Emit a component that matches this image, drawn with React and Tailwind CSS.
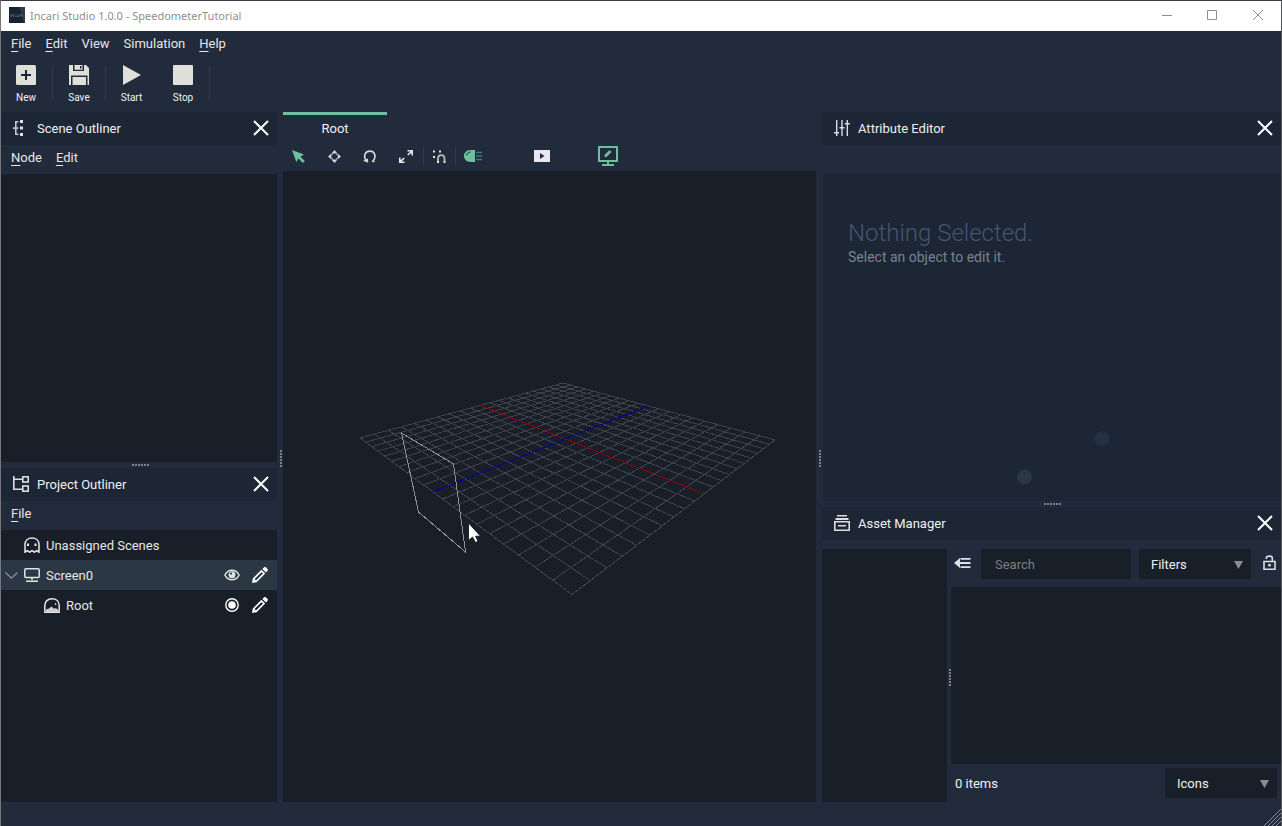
import React from "react";

const focus = "outline-none focus-visible:ring-1 focus-visible:ring-[#6ebf9f]";

/* ---------- small building blocks ---------- */

function MenuItem({ label, mnemonic }) {
  return (
    <button type="button" className={"text-[#e6e6e6] hover:text-white " + focus}>
      {mnemonic ? (
        <>
          <span className="underline underline-offset-3">{label[0]}</span>
          {label.slice(1)}
        </>
      ) : (
        label
      )}
    </button>
  );
}

function ToolButton({ label, children, className }) {
  return (
    <button type="button" className={"flex flex-col items-center gap-[5px] text-[10px] leading-4 text-[#f0f0f0] " + focus + " " + className}>
      {children}
      {label}
    </button>
  );
}

function CloseButton({ label }) {
  return (
    <button type="button" aria-label={label} className={"flex pb-px " + focus}>
      <svg width="16" height="16" viewBox="0 0 16 16" stroke="#fff" strokeWidth="2">
        <path d="M1 1 15 15M15 1 1 15" />
      </svg>
    </button>
  );
}

function PanelHeader({ icon, title }) {
  return (
    <header className="flex h-[33px] shrink-0 items-center justify-between rounded-xs bg-[#1c2635] pr-2 pl-3">
      <div className="flex items-center gap-2">
        <span className="pb-px">{icon}</span>
        <h2>{title}</h2>
      </div>
      <CloseButton label={"Close " + title} />
    </header>
  );
}

function Dots({ vertical }) {
  const cells = [0, 3, 6, 9, 12, 15];
  return (
    <svg width={vertical ? 2 : 17} height={vertical ? 17 : 2} fill="#7d838e" className="shrink-0">
      {cells.map((c) => (
        <rect key={c} x={vertical ? 0 : c} y={vertical ? c : 0} width="2" height="2" />
      ))}
    </svg>
  );
}

function Splitter({ vertical }) {
  return (
    <div className={"flex shrink-0 items-center justify-center pl-0.5 " + (vertical ? "w-[6px] pt-0.5" : "h-[6px]")}>
      <Dots vertical={vertical} />
    </div>
  );
}

function Dropdown({ label, options }) {
  return (
    <div className="relative h-[30px] w-28 shrink-0">
      <select aria-label={label} className={"h-full w-full appearance-none rounded-xs bg-[#181f28] px-3 pt-0.5 text-[#f0f0f0] " + focus}>
        {options.map((o) => (
          <option key={o}>{o}</option>
        ))}
      </select>
      <svg className="pointer-events-none absolute top-3 right-2" width="9" height="8" viewBox="0 0 9 8" fill="#8b8b91">
        <path d="M0 0H9L4.5 8Z" />
      </svg>
    </div>
  );
}

/* ---------- icons ---------- */

const SceneOutlinerIcon = () => (
  <svg width="16" height="16" viewBox="0 0 16 16" fill="#e4e4e8">
    <path d="M2 1H5.5V2.5H3.6V13.500H5.500V15H2V9H0V7.200H2Z" fillOpacity=".85" />
    <path d="M5.500 7.200H3V9H5.500Z" fillOpacity=".7" />
    <rect x="7" y="0" width="3" height="3" />
    <rect x="7" y="6.500" width="3" height="3" />
    <rect x="7" y="13" width="3" height="3" />
  </svg>
);

const ProjectOutlinerIcon = () => (
  <svg width="16" height="16" viewBox="0 0 16 16" fill="none" stroke="#dcdce2" strokeWidth="1.6">
    <path d="M.8 0V13.200H9.500M.8 3.300H9.500" />
    <rect x="9.800" y=".8" width="5.400" height="5.200" />
    <rect x="9.800" y="10" width="5.400" height="5.200" />
  </svg>
);

const SlidersIcon = () => (
  <svg width="16" height="16" viewBox="0 0 16 16" fill="#dcdce2">
    <path d="M2 0H3.4V16H2ZM7.3 0H8.7V16H7.3ZM12.6 0H14V16H12.6ZM0 12H5V13.6H0ZM5.5 7H10.5V8.6H5.5ZM10.8 3H15.8V4.6H10.8Z" />
  </svg>
);

const ArchiveIcon = () => (
  <svg width="16" height="16" viewBox="0 0 16 16" fill="#dcdce2">
    <path d="M3 0H13V1.600H3ZM1.500 3H14.500V5H1.500ZM4 10H12V11.600H4Z" />
    <path fillRule="evenodd" d="M0 6H16V16H0ZM1.6 7.6V14.4H14.4V7.6Z" />
  </svg>
);

const GhostIcon = () => (
  <svg width="16" height="16" viewBox="0 0 16 16" fill="none" stroke="#e6e6ea" strokeWidth="1.5">
    <path d="M1 15.2V7.5C1 3.5 4 .9 8 .9S15 3.5 15 7.5V15.2L12.7 13.6 10.4 15.2 8 13.6 5.6 15.2 3.3 13.6Z" />
    <path d="M4 6.5V9M11.5 6.5V9" strokeWidth="2" />
  </svg>
);

const MonitorIcon = () => (
  <svg width="16" height="14" viewBox="0 0 16 14" fill="none" stroke="#dfe5e3" strokeWidth="1.5">
    <rect x=".8" y=".8" width="14.400" height="8.800" rx="1" />
    <path d="M8 9.5V12M2 13.2H14" />
  </svg>
);

const SceneIcon = () => (
  <svg width="16" height="15" viewBox="0 0 16 15" fill="none" stroke="#e6e6ea" strokeWidth="1.5">
    <path d="M.8 14.2V7.5C.8 3.5 3.8 .8 8 .8S15.2 3.5 15.2 7.5V14.2Z" />
    <path d="M2 14V11.6L5 10.400 7.500 8.500 9.500 10.400 12 10.200 14 11.600V14Z" fill="#cfcfd3" stroke="none" />
    <circle cx="11.6" cy="6" r=".9" fill="#cfcfd3" stroke="none" />
  </svg>
);

const EyeIcon = () => (
  <svg width="16" height="12" viewBox="0 0 16 12" fill="none" stroke="#dce5e2" strokeWidth="1.5">
    <path d="M.9 6C2.5 2.8 5 1.2 8 1.2S13.5 2.8 15.1 6C13.5 9.2 11 10.8 8 10.8S2.5 9.2 .9 6Z" />
    <circle cx="8" cy="5.8" r="3.5" fill="#dce5e2" stroke="none" />
    <circle cx="7" cy="4.6" r="1.1" fill="#2c3745" stroke="none" />
  </svg>
);

const PencilIcon = () => (
  <svg width="16" height="16" viewBox="0 0 16 16" fill="#fff">
    <path fillRule="evenodd" d="M0 16 .8 11.400 9.400 2.800 13.200 6.600 4.600 15.200ZM2.600 12 4 13.400 11 6.600 9.400 5.200Z" />
    <path d="M10.4 2 12.200.3C13 -.1 13.600 0 14 .4L15.600 2C16 2.400 16 3 15.600 3.600L14.100 5.600Z" />
  </svg>
);

const TargetIcon = () => (
  <svg width="14" height="14" viewBox="0 0 14 14" fill="none" stroke="#fff" strokeWidth="1.4">
    <circle cx="7" cy="7" r="6.2" />
    <circle cx="7" cy="7" r="3.8" fill="#fff" stroke="none" />
  </svg>
);

/* ---------- 3D viewport ---------- */

const gridCorners = [[77, 267], [289, 423.5], [492, 269], [280, 212]];

function projector([p0, p1, p2, p3]) {
  const sx = p0[0] - p1[0] + p2[0] - p3[0];
  const sy = p0[1] - p1[1] + p2[1] - p3[1];
  const dx1 = p1[0] - p2[0], dx2 = p3[0] - p2[0];
  const dy1 = p1[1] - p2[1], dy2 = p3[1] - p2[1];
  const det = dx1 * dy2 - dx2 * dy1;
  const g = (sx * dy2 - dx2 * sy) / det;
  const h = (dx1 * sy - sx * dy1) / det;
  const a = p1[0] - p0[0] + g * p1[0], b = p3[0] - p0[0] + h * p3[0];
  const d = p1[1] - p0[1] + g * p1[1], e = p3[1] - p0[1] + h * p3[1];
  return (u, v) => {
    const w = g * u + h * v + 1;
    return [(a * u + b * v + p0[0]) / w, (d * u + e * v + p0[1]) / w];
  };
}

const project = projector(gridCorners);
const line = (u1, v1, u2, v2) => "M" + project(u1, v1).join(" ") + "L" + project(u2, v2).join(" ");
const steps = Array.from({ length: 21 }, (_, i) => i / 20);
const gridPath = steps.map((t) => line(t, 0, t, 1) + line(0, t, 1, t)).join("");

function Viewport() {
  return (
    <div className="flex flex-1 items-center justify-center overflow-hidden bg-[#181f28]">
      <svg width="533" height="631" viewBox="0 0 533 631" fill="none" role="img" aria-label="3D scene" className="shrink-0">
        <g shapeRendering="crispEdges" strokeWidth="1">
          <path d={gridPath} stroke="#3f4049" />
          <path d={line(0, 0.5, 1, 0.5)} stroke="#870006" />
          <path d={line(0.5, 0, 0.5, 1)} stroke="#00008c" />
          <path d="M118.500 262 170.500 293 182.500 381 135.500 341Z" stroke="#8f9090" />
        </g>
        <path d="M185.500 352V369.500L189.500 366 192.500 371.500 195 370.300 192.500 365.200H197.500Z" fill="#fff" stroke="#0c0f14" strokeWidth=".8" />
      </svg>
    </div>
  );
}

function ViewportTool({ label, className = "", children }) {
  return (
    <button type="button" aria-label={label} className={"flex h-[22px] shrink-0 items-center justify-center " + focus + " " + className}>
      {children}
    </button>
  );
}

function ViewportToolbar() {
  return (
    <div className="flex h-[26px] items-center pb-1" role="toolbar" aria-label="Viewport tools">
      <ViewportTool label="Select" className="w-[33px] pr-[3px]">
        <svg width="13" height="13" viewBox="0 0 13 13" fill="#6ebf9f"><path d="M0 0 12 4.6 8.400 6.700 12.800 11 10.800 13 6.500 8.600 4.300 12Z" /></svg>
      </ViewportTool>
      <ViewportTool label="Move" className="w-9">
        <svg width="13" height="13" viewBox="0 0 13 13" fill="none" stroke="#d6d6dc" strokeWidth="1.2">
          <path d="M6.500 0 9.500 3.400H3.500ZM6.500 13 9.500 9.600H3.500ZM0 6.500 3.400 3.500V9.500ZM13 6.500 9.600 3.500V9.500Z" fill="#d6d6dc" stroke="none" />
          <path d="M4.600 4.600 3.800 3.800M8.400 4.600 9.200 3.800M4.600 8.400 3.800 9.200M8.400 8.400 9.200 9.200" />
        </svg>
      </ViewportTool>
      <ViewportTool label="Rotate" className="w-9">
        <svg width="14" height="13" viewBox="0 0 14 13" fill="none" stroke="#d6d6dc" strokeWidth="1.700">
          <path d="M4 11.300C-.4 7.500 1.800 1.200 7 1.200S13.500 7.500 9.800 11.200" />
          <path d="M0 10.800 5.200 12.800 5 8.600Z" fill="#d6d6dc" stroke="none" />
          <path d="M9 11.500H11.500" strokeWidth="1.400" />
        </svg>
      </ViewportTool>
      <ViewportTool label="Scale" className="w-[35px]">
        <svg width="14" height="13" viewBox="0 0 14 13" fill="none" stroke="#e4e4e8" strokeWidth="1.600">
          <path d="M8.500 .8H13.200V5.500M13.200 .8 8.800 5M.8 7.500V12.200H5.500M.8 12.200 5.200 8" />
        </svg>
      </ViewportTool>
      <span className="h-[18px] w-px bg-[#313b4e]" />
      <ViewportTool label="Snap" className="w-[31px]">
        <svg width="13" height="13" viewBox="0 0 13 13" fill="#e4e4e8">
          <path d="M0 .5H2V2.500H0ZM6 .5H8V2.500H6ZM0 6H2V8H0Z" />
          <path d="M5 11V8.500C5 4 11.500 4 11.500 8.500V11" fill="none" stroke="#b8b9bf" strokeWidth="1.800" />
          <path d="M4 11H6V13H4ZM10.500 11H12.500V13H10.500Z" />
        </svg>
      </ViewportTool>
      <span className="h-[18px] w-px bg-[#313b4e]" />
      <ViewportTool label="Lighting" className="w-[34px]">
        <svg width="18" height="12" viewBox="0 0 18 12">
          <path d="M11 0H6.500C2.500 0 0 2.800 0 6S2.500 12 6.500 12H11Z" fill="#6ebf9f" />
          <path d="M2.500 5.500C3.200 3.300 4.500 2.300 6.700 1.900" stroke="#222b3b" fill="none" />
          <path d="M12 2.500H18M12 6H18M12 9.500H18" stroke="#3f7a6c" strokeWidth="1.300" />
        </svg>
      </ViewportTool>
      <ViewportTool label="Preview" className="ml-9 w-8">
        <svg width="16" height="12" viewBox="0 0 16 12"><path d="M0 0H16V12H0Z" fill="#e9e7f1" /><path d="M6 3 10.500 6 6 9Z" fill="#222b3b" /></svg>
      </ViewportTool>
      <ViewportTool label="Edit screen" className="ml-[34px] w-8">
        <svg width="20" height="20" viewBox="0 0 20 20" fill="none" stroke="#6ebf9f" strokeWidth="2">
          <path d="M1 1H19V15H1ZM10 15V18M4 19H16" />
          <path d="M7 10.500 12.500 5" strokeWidth="2.800" />
        </svg>
      </ViewportTool>
    </div>
  );
}

/* ---------- tree rows ---------- */

function TreeRow({ icon, label, indent, selected, expandable, action }) {
  return (
    <li className={"flex h-[30px] items-center pr-[9px] text-[#e6e6e6] " + (selected ? "bg-[#2c3745]" : "")}>
      <span className={"flex shrink-0 items-center pl-1 " + (indent ? "w-[43px]" : "w-[23px]")}>
        {expandable && (
          <button type="button" aria-label={"Collapse " + label} className={focus}>
            <svg width="13" height="7" viewBox="0 0 13 7" fill="none" stroke="#8f969f" strokeWidth="1.200"><path d="M.5 .5 6.500 6.200 12.500 .5" /></svg>
          </button>
        )}
      </span>
      {icon}
      <span className="ml-[6px] flex-1 pt-0.5">{label}</span>
      {action && (
        <>
          <button type="button" aria-label={action.label} className={"mr-3 flex w-4 justify-center " + focus}>{action.icon}</button>
          <button type="button" aria-label={"Edit " + label} className={focus}><PencilIcon /></button>
        </>
      )}
    </li>
  );
}

/* ---------- faint backdrop of the empty attribute editor ---------- */

const specks = Array.from({ length: 110 }, (_, i) => ({
  x: 300 + ((i * 7) % 15) * 6,
  y: 34 + ((i * 53) % 283),
}));

function AttributeBackdrop() {
  return (
    <svg className="absolute inset-0" width="458" height="327" viewBox="0 0 458 327" aria-hidden="true">
      <circle cx="279" cy="264.500" r="7.500" fill="#243142" />
      <circle cx="201.500" cy="303" r="7.500" fill="#2a3646" />
      <g fill="#202a39">
        {specks.map((s, i) => (
          <rect key={i} x={s.x} y={s.y} width="1" height="1" />
        ))}
      </g>
    </svg>
  );
}

/* ---------- page ---------- */

export default function App() {
  return (
    <div className="flex min-h-screen flex-col border-x border-t border-t-[#3b3b48] border-r-[#55565c] border-l-[#76777b] bg-[#222b3b] font-[Roboto,sans-serif] text-[13px] leading-5 text-[#f0f0f0]">
      <div className="flex h-[30px] shrink-0 items-center bg-white pb-0.5 pl-2 text-[#8f8f8f]">
        <svg width="16" height="16" viewBox="0 0 16 16" aria-hidden="true">
          <rect width="16" height="16" fill="#182231" />
          <path d="M10 0H16V16H15Z" fill="#2d3b4e" />
          <text x="1" y="9.500" fontSize="4" fill="#6f7783">INCARI</text>
        </svg>
        <h1 className="ml-[5px] flex-1 pt-0.5 font-['Noto_Sans',sans-serif] text-[11px]">Incari Studio 1.0.0 - SpeedometerTutorial</h1>
        <button type="button" aria-label="Minimize" className="flex h-full w-[45px] items-center justify-center">
          <svg width="10" height="10" stroke="#8f8f8f"><path d="M0 5.500H10" /></svg>
        </button>
        <button type="button" aria-label="Maximize" className="flex h-full w-[46px] items-center justify-center">
          <svg width="10" height="10" fill="none" stroke="#8f8f8f"><path d="M.5 .5H9.500V9.500H.5Z" /></svg>
        </button>
        <button type="button" aria-label="Close" className="flex h-full w-[46px] items-center justify-center">
          <svg width="10" height="10" stroke="#8f8f8f"><path d="M0 0 10 10M10 0 0 10" /></svg>
        </button>
      </div>

      <nav aria-label="Main menu" className="flex h-[26px] shrink-0 items-center gap-[14px] px-[10px]">
        <MenuItem label="File" mnemonic />
        <MenuItem label="Edit" mnemonic />
        <MenuItem label="View" />
        <MenuItem label="Simulation" />
        <MenuItem label="Help" mnemonic />
      </nav>

      <div role="toolbar" aria-label="Project" className="flex h-[55px] shrink-0 items-start pt-2">
        <ToolButton label="New" className="w-[51px] pr-px">
          <svg width="20" height="20" viewBox="0 0 20 20"><rect width="20" height="20" rx="1.500" fill="#dfe0da" /><path d="M10 5V15M5 10H15" stroke="#1c2635" strokeWidth="2" /></svg>
        </ToolButton>
        <span className="mt-px h-[34px] w-px bg-[#323c4d]" />
        <ToolButton label="Save" className="w-[52px]">
          <svg width="20" height="20" viewBox="0 0 20 20" fill="#dfe0da">
            <path d="M0 0H4V6H15V0H17L20 3V20H18.500V10.500H2V20H0ZM5.500 0H13.500V4.800H5.500ZM3.500 12H17V20H3.500Z" />
            <path d="M11 1H12.500V3.500H11Z" fill="#1c2635" />
          </svg>
        </ToolButton>
        <span className="mt-px h-[34px] w-px bg-[#323c4d]" />
        <ToolButton label="Start" className="w-[51px]">
          <svg width="18" height="20" viewBox="0 0 18 20" fill="#dfe0da"><path d="M0 0 18 10 0 20Z" /></svg>
        </ToolButton>
        <ToolButton label="Stop" className="w-[52px]">
          <svg width="20" height="20" fill="#dfe0da"><rect width="20" height="20" rx="1" /></svg>
        </ToolButton>
        <span className="mt-px h-[34px] w-px bg-[#323c4d]" />
      </div>

      <main className="flex flex-1">
        <div className="flex w-[276px] shrink-0 flex-col">
          <section className="flex flex-[350] flex-col">
            <PanelHeader icon={<SceneOutlinerIcon />} title="Scene Outliner" />
            <nav aria-label="Scene menu" className="flex h-[29px] items-center gap-[14px] px-[10px] pb-1">
              <MenuItem label="Node" mnemonic />
              <MenuItem label="Edit" mnemonic />
            </nav>
            <div className="flex-1 rounded-xs bg-[#181f28]" />
          </section>
          <Splitter />
          <section className="flex flex-[334] flex-col">
            <PanelHeader icon={<ProjectOutlinerIcon />} title="Project Outliner" />
            <nav aria-label="Project menu" className="flex h-[29px] items-center px-[10px] pb-1">
              <MenuItem label="File" mnemonic />
            </nav>
            <ul className="flex-1 rounded-xs bg-[#181f28]">
              <TreeRow icon={<GhostIcon />} label="Unassigned Scenes" />
              <TreeRow icon={<MonitorIcon />} label="Screen0" selected expandable action={{ label: "Toggle visibility", icon: <EyeIcon /> }} />
              <TreeRow icon={<SceneIcon />} label="Root" indent action={{ label: "Set as default scene", icon: <TargetIcon /> }} />
            </ul>
          </section>
        </div>

        <Splitter vertical />

        <section className="flex min-w-0 flex-1 flex-col">
          <div role="tablist" className="flex">
            <button type="button" role="tab" aria-selected="true" className={"h-[33px] w-[104px] border-t-3 border-[#6ebf9f] pb-0.5 " + focus}>
              Root
            </button>
          </div>
          <ViewportToolbar />
          <Viewport />
        </section>

        <Splitter vertical />

        <div className="flex w-[459px] shrink-0 flex-col">
          <section className="flex flex-[389] flex-col">
            <PanelHeader icon={<SlidersIcon />} title="Attribute Editor" />
            <div className="relative mt-[29px] ml-px flex-1 bg-[#1c2635]">
              <AttributeBackdrop />
              <div className="relative px-[25px] pt-[43px]">
                <p className="text-[24px] leading-8 font-light text-[#455571]">Nothing Selected.</p>
                <p className="text-[14px] leading-4 text-[#7b828e]">Select an object to edit it.</p>
              </div>
            </div>
          </section>
          <Splitter />
          <section className="flex flex-[295] flex-col">
            <PanelHeader icon={<ArchiveIcon />} title="Asset Manager" />
            <div className="mt-[9px] flex flex-1">
              <div className="w-[125px] shrink-0 rounded-xs bg-[#181f28]" />
              <div className="flex w-1 shrink-0 items-center justify-end pt-1"><Dots vertical /></div>
              <div className="flex min-w-0 flex-1 flex-col">
                <div className="flex items-center pr-1">
                  <button type="button" aria-label="Collapse folders" className={"mr-[10px] ml-[3px] pb-0.5 " + focus}>
                    <svg width="17" height="10" viewBox="0 0 17 10" fill="#e0e0e6"><path d="M0 5 6 0V10ZM6.500 0H16.500V1.800H6.500ZM5 4.100H16.500V5.900H5ZM6.500 8.200H16.500V10H6.500Z" /></svg>
                  </button>
                  <input type="search" aria-label="Search assets" placeholder="Search" className={"h-[30px] w-[150px] rounded-xs bg-[#181f28] px-[14px] text-[#f0f0f0] placeholder:text-[#7c7e83] " + focus} />
                  <span className="w-2" />
                  <Dropdown label="Filters" options={["Filters"]} />
                  <button type="button" aria-label="Lock" className={"ml-3 pb-0.5 " + focus}>
                    <svg width="13" height="16" viewBox="0 0 13 16" fill="none" stroke="#dcdce2" strokeWidth="1.600">
                      <path d="M1 6.500H12V14.200H1ZM3.300 4V3C3.300 .5 9.300 .3 9.300 3.200V6" />
                      <circle cx="6.500" cy="10.200" r="1.400" fill="#dcdce2" stroke="none" />
                    </svg>
                  </button>
                </div>
                <div className="mt-2 flex-1 rounded-xs bg-[#181f28]" />
                <div className="flex h-[38px] items-center justify-between pr-1 pl-1">
                  <span className="pt-0.5">0 items</span>
                  <Dropdown label="View mode" options={["Icons", "List"]} />
                </div>
              </div>
            </div>
          </section>
        </div>
      </main>

      <footer className="flex h-6 shrink-0 items-end justify-end">
        <svg width="17" height="17" viewBox="0 0 17 17" stroke="#7f8aa6" aria-hidden="true">
          <path d="M0 17 17 0M4 17 17 4M8 17 17 8M12 17 17 12" />
        </svg>
      </footer>
    </div>
  );
}
